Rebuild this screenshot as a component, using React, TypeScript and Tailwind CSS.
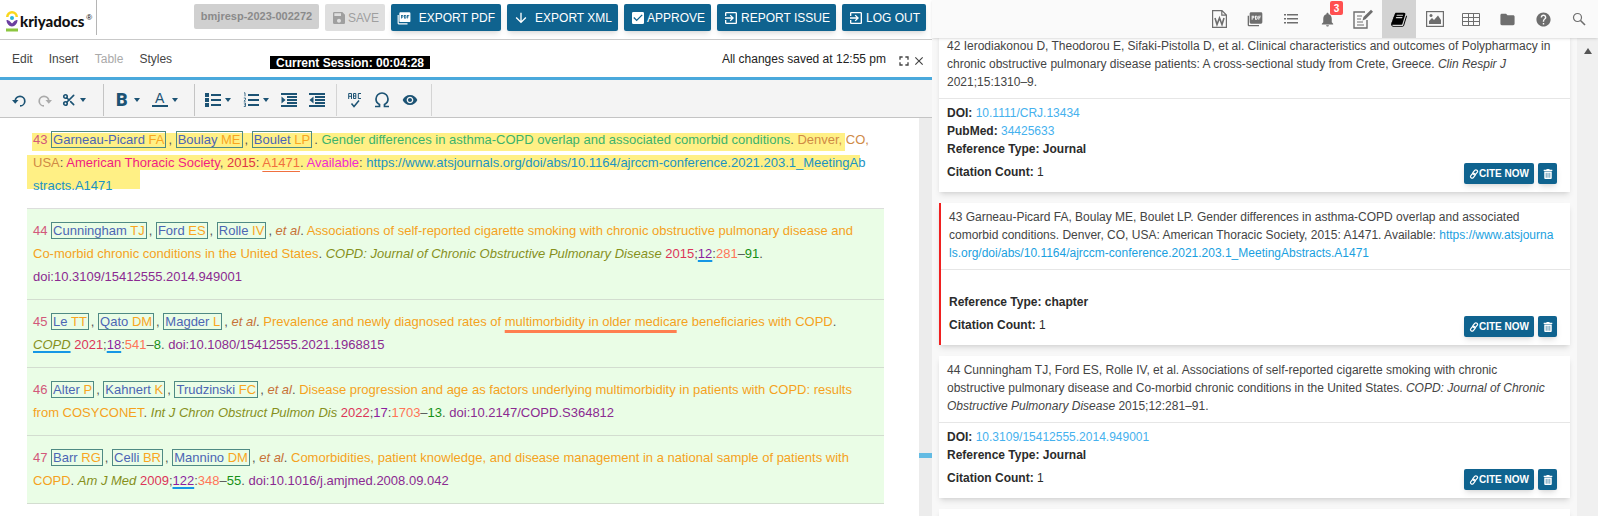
import type { ReactNode } from 'react';
import { Scissors } from 'lucide-react';
import {
  MdArrowDownward,
  MdCheckBox,
  MdClose,
  MdExitToApp,
  MdFolder,
  MdFullscreen,
  MdHelp,
  MdNotifications,
  MdRemoveRedEye,
  MdSave,
} from 'react-icons/md';
import { FaTrashAlt } from 'react-icons/fa';

/* ---------- icons ---------- */

function Logo() {
  return (
    <svg viewBox="0 0 24 44" className="w-3 h-[22px] shrink-0" aria-hidden="true">
      <path d="M2.500 14a9.500 9.500 0 0 1 19 0" fill="none" stroke="#f9d71c" strokeWidth="5" />
      <circle cx="12" cy="16" r="4" fill="#29b6d8" />
      <path d="M1 20c3 0 5 1 7 3l4 4 4-4c2-2 4-3 7-3 0 7-5 13-11 13S1 27 1 20z" fill="#6b3fa0" />
      <rect x="0" y="37" width="24" height="6" fill="#8cc63f" />
    </svg>
  );
}

function PdfIcon({ className }: { className: string }) {
  return (
    <svg viewBox="0 0 24 24" className={className} fill="currentColor" aria-hidden="true">
      <path d="M1 7h2v14h15v2H3a2 2 0 0 1-2-2z" />
      <path
        fillRule="evenodd"
        d="M6 2h15a2 2 0 0 1 2 2v13a2 2 0 0 1-2 2H6a2 2 0 0 1-2-2V4c0-1.1.9-2 2-2zm1 5v6h1.4v-2H10l1-1V8l-1-1zm1.4 1.2h1.2v1.6H8.4zM12 7v6h2.8l1.2-1.2V8.2L14.8 7zm1.4 1.3h1.2v3.4h-1.2zM17 7v6h1.4v-2.3H20V9.4h-1.6V8.3H21V7z"
      />
    </svg>
  );
}

function UndoIcon() {
  return (
    <svg viewBox="0 0 14 14" className="w-3.5 h-3.5" fill="none" stroke="currentColor" strokeWidth="1.7" aria-hidden="true">
      <path d="M3.200 8a4.800 4.800 0 1 1 4.800 4.900" />
      <path d="M0 7h6.500L3.200 10.800z" fill="currentColor" stroke="none" />
    </svg>
  );
}

function RedoIcon() {
  return (
    <svg viewBox="0 0 14 14" className="w-3.5 h-3.5" fill="none" stroke="currentColor" strokeWidth="1.7" aria-hidden="true">
      <path d="M10.800 8a4.800 4.800 0 1 0-4.800 4.900" />
      <path d="M7.500 7H14l-3.200 3.800z" fill="currentColor" stroke="none" />
    </svg>
  );
}

function BulletListIcon() {
  return (
    <svg viewBox="0 0 16 16" className="w-4 h-4" fill="currentColor" aria-hidden="true">
      <path d="M0 1h4v4H0zM6 2h10v2H6zM0 6h4v4H0zM6 7h10v2H6zM0 11h4v4H0zM6 12h10v2H6z" />
    </svg>
  );
}

function NumberedListIcon() {
  return (
    <svg viewBox="0 0 16 16" className="w-4 h-4" fill="none" stroke="currentColor" aria-hidden="true">
      <path d="M5 3h11M5 8h11M5 13h11" strokeWidth="2" />
      <path d="M1 .8h1v3.500M.8 6h1.700v1.400L1 9.200h1.700M.8 11h1.700v3.500H.8M1.200 12.800h1.300" strokeWidth=".8" />
    </svg>
  );
}

function IndentIcon({ outdent }: { outdent?: boolean }) {
  return (
    <svg viewBox="0 0 16 14" className="w-4 h-3.5" fill="currentColor" aria-hidden="true">
      <path d="M0 0h16v2H0zM6 3h10v2H6zM6 6h10v2H6zM6 9h10v2H6zM0 12h16v2H0z" />
      <path d={outdent ? 'M4.500 3.500v7L.5 7z' : 'M.5 3.500v7L4.500 7z'} />
    </svg>
  );
}

function SpellIcon() {
  return (
    <svg viewBox="0 0 14 16" className="w-3.5 h-4" fill="none" stroke="currentColor" aria-hidden="true">
      <path d="M.7 7V1.500h2.800V7M.7 4.300h2.800M5.500 6.500v-5h2.300v5zM5.500 4h2.300M13 1.500h-2.700v5H13" strokeWidth="1" />
      <path d="M3.500 11.500l2.500 3 5-6" strokeWidth="1.5" />
    </svg>
  );
}

function OmegaIcon() {
  return (
    <svg viewBox="0 0 16 16" className="w-4 h-4" fill="none" stroke="currentColor" strokeWidth="1.7" aria-hidden="true">
      <path d="M1 14.500h4.500v-2C3.500 11.500 2 9.500 2 7a6 6 0 0 1 12 0c0 2.500-1.500 4.500-3.500 5.500v2H15" />
    </svg>
  );
}

function WordIcon() {
  return (
    <svg viewBox="0 0 15 18" className="w-[15px] h-[18px]" fill="none" stroke="currentColor" aria-hidden="true">
      <path d="M.6.6h9.400l4.400 4.400v12.400H.6zM9.800.6v4.600h4.600" strokeWidth="1.2" />
      <path d="M3 8l2 6.500L7.500 8l2.500 6.500L12 8" strokeWidth="1.6" />
    </svg>
  );
}

function EditDocIcon() {
  return (
    <svg viewBox="0 0 20 20" className="w-5 h-5" fill="none" stroke="currentColor" aria-hidden="true">
      <path d="M12 3H1v16h13V11" strokeWidth="1.4" />
      <path d="M4 7h5M4 10h4M4 13h6M4 16h7" strokeWidth="1" />
      <path d="M9.500 11.500l1-3.500L18 .8l2 2-7.500 7.400z" fill="currentColor" stroke="none" />
    </svg>
  );
}

function BookIcon() {
  return (
    <svg viewBox="0 0 1664 1792" className="w-4 h-[17px]" fill="currentColor" aria-hidden="true">
      <path d="M1639 478q40 57 18 129l-275 906q-19 64-76.500 107.500T1183 1664H260q-77 0-148.500-53.500T12 1479q-24-67-2-127 0-4 3-27t4-37q1-8-3-21.500t-3-19.500q2-11 8-21t16.500-23.500T52 1200q23-38 45-91.500t30-91.500q3-10 .5-30t-.5-28q3-11 17-28t17-23q21-36 42-92t25-90q1-9-2.500-32t.5-28q4-13 22-30.500t22-22.500q19-26 42.500-84.500T340 461q1-8-3-25.500t-2-26.500q2-8 9-18t18-23 17-21q8-12 16.500-30.500t15-35 16-36 19.500-32T469.500 188t36-11.500T553 182l-1 3q38-9 51-9h761q74 0 114 56t18 130l-274 906q-36 119-71.500 153.500T1022 1456H153q-27 0-38 15-11 16-1 43 24 70 144 70h923q29 0 56-15.500t35-41.500l300-987q7-22 5-57 38 15 59 43zm-1064 2q-4 13 2 22.500t20 9.500h608q13 0 25.500-9.500T1247 480l21-64q4-13-2-22.500t-20-9.500H638q-13 0-25.500 9.500T596 416zm-83 256q-4 13 2 22.500t20 9.500h608q13 0 25.500-9.500T1164 736l21-64q4-13-2-22.500t-20-9.500H555q-13 0-25.500 9.500T513 672z" />
    </svg>
  );
}

function ListIcon() {
  return (
    <svg viewBox="0 0 14 10" className="w-3.5 h-2.5" fill="currentColor" aria-hidden="true">
      <path d="M0 0h2v1.500H0zM3 0h11v1.500H3zM0 4h2v1.500H0zM3 4h11v1.500H3zM0 8h2v1.500H0zM3 8h11v1.500H3z" />
    </svg>
  );
}

function ImageIcon() {
  return (
    <svg viewBox="0 0 18 16" className="w-[18px] h-4" fill="currentColor" aria-hidden="true">
      <rect x=".6" y=".6" width="16.800" height="14.800" fill="none" stroke="currentColor" strokeWidth="1.2" />
      <path d="M3 13v-3l3-3 2 2 4-4.500L15 9v4z" />
      <circle cx="5" cy="4.500" r="1.500" />
    </svg>
  );
}

function TableIcon() {
  return (
    <svg viewBox="0 0 18 13" className="w-[18px] h-[13px]" fill="none" stroke="currentColor" strokeWidth="1" aria-hidden="true">
      <path d="M.5.5h17v12H.5zM.5 4.500h17M.5 8.500h17M6.500.5v12M11.500.5v12" />
    </svg>
  );
}

function SearchIcon() {
  return (
    <svg viewBox="0 0 14 14" className="w-3.5 h-3.5" fill="none" stroke="currentColor" strokeWidth="1.2" aria-hidden="true">
      <circle cx="5.500" cy="5.500" r="4" />
      <path d="M8.500 8.500l4.500 4.500" strokeWidth="1.6" />
    </svg>
  );
}

function ChainIcon() {
  return (
    <svg viewBox="0 0 10 10" className="w-2.5 h-2.5" fill="none" stroke="currentColor" strokeWidth="1.2" aria-hidden="true">
      <rect x="4.600" y=".6" width="3.200" height="5.400" rx="1.600" transform="rotate(40 6.200 3.300)" />
      <rect x="2.200" y="4" width="3.200" height="5.400" rx="1.600" transform="rotate(40 3.800 6.700)" />
    </svg>
  );
}

function Caret() {
  return (
    <svg viewBox="0 0 6 4" className="w-1.5 h-1 shrink-0" fill="currentColor" aria-hidden="true">
      <path d="M0 0h6L3 4z" />
    </svg>
  );
}

/* ---------- header ---------- */

function ActionButton({ icon, label, width }: { icon: ReactNode; label: string; width: string }) {
  return (
    <button
      className={`${width} h-[27px] shrink-0 flex items-center justify-between px-1.5 rounded-xs bg-[#0f638f] text-white text-xs whitespace-nowrap shadow-md`}
    >
      {icon}
      {label}
    </button>
  );
}

function TopBar() {
  return (
    <header className="h-10 shrink-0 flex justify-between bg-white border-b border-[#c9c9c9]">
      <div className="h-[35px] w-[97px] pl-1.5 pt-1.5 flex items-center gap-0.5 border-r border-[#b5b5b5]">
        <Logo />
        <span className="font-[Lato] font-black text-[15px] leading-5 text-[#111]">kriyadocs</span>
        <span className="self-start pt-1 text-[8px] leading-4">®</span>
      </div>
      <div className="flex items-start gap-1.5 pt-1 pr-1.5">
        <span className="w-[125px] h-[25px] flex items-center justify-center rounded-xs bg-[#d0d0d0] text-[#8a8a8a] text-[11px] font-bold">
          bmjresp-2023-002272
        </span>
        <button
          disabled
          className="w-[60px] h-[27px] flex items-center justify-between px-1.5 rounded-xs bg-[#dfdfdf] text-[#9f9f9f] text-xs"
        >
          <MdSave className="w-4 h-4" />
          SAVE
        </button>
        <ActionButton width="w-[110px]" icon={<PdfIcon className="w-3.5 h-3.5" />} label="EXPORT PDF" />
        <ActionButton width="w-[111px]" icon={<MdArrowDownward className="w-4 h-4" />} label="EXPORT XML" />
        <ActionButton width="w-[87px]" icon={<MdCheckBox className="w-4 h-4" />} label="APPROVE" />
        <ActionButton width="w-[119px]" icon={<MdExitToApp className="w-4 h-4" />} label="REPORT ISSUE" />
        <ActionButton width="w-[84px]" icon={<MdExitToApp className="w-4 h-4" />} label="LOG OUT" />
      </div>
    </header>
  );
}

function MenuBar() {
  return (
    <div className="h-[37px] shrink-0 flex items-center pl-3 pr-1.5 text-xs text-[#444]">
      <nav className="flex gap-4 w-[258px]">
        <button>Edit</button>
        <button>Insert</button>
        <button disabled className="text-[#aaa]">Table</button>
        <button>Styles</button>
      </nav>
      <span className="mt-2 h-[13px] w-40 flex items-center justify-center bg-black text-white font-bold">
        Current Session: 00:04:28
      </span>
      <span className="ml-auto text-[#222]">All changes saved at 12:55 pm</span>
      <button aria-label="Full screen" className="ml-2.5 mt-1">
        <MdFullscreen className="w-4 h-4" />
      </button>
      <button aria-label="Close" className="mt-1">
        <MdClose className="w-3.5 h-3.5" />
      </button>
    </div>
  );
}

function Toolbar() {
  return (
    <div className="h-[41px] shrink-0 pt-0.5 flex items-center border-t-[3px] border-t-[#4aa9dc] border-b border-b-[#c4c4c4] bg-[#f4f4f4] text-[#1c5374]">
      <div className="h-8 w-[104px] pl-3 flex items-center border-r border-[#c4c4c4]">
        <button aria-label="Undo" className="mr-3"><UndoIcon /></button>
        <button aria-label="Redo" disabled className="mr-2.5 text-[#aaa]"><RedoIcon /></button>
        <button aria-label="Cut" className="flex items-center gap-1">
          <Scissors className="w-3.5 h-3.5" strokeWidth={2.8} />
          <Caret />
        </button>
      </div>
      <div className="h-8 w-[91px] pl-3 flex items-center gap-3 border-r border-[#c4c4c4]">
        <button aria-label="Bold" className="flex items-center gap-1.5">
          <span className="text-lg leading-5 font-black font-[Roboto]">B</span>
          <Caret />
        </button>
        <button aria-label="Text colour" className="flex items-center gap-1">
          <span className="w-4 text-sm leading-[13px] border-b-2 border-current">A</span>
          <Caret />
        </button>
      </div>
      <div className="h-8 w-[142px] pl-2.5 flex items-center gap-3 border-r border-[#d4d4d4]">
        <button aria-label="Bulleted list" className="flex items-center gap-1">
          <BulletListIcon />
          <Caret />
        </button>
        <button aria-label="Numbered list" className="flex items-center gap-1">
          <NumberedListIcon />
          <Caret />
        </button>
        <button aria-label="Increase indent"><IndentIcon /></button>
        <button aria-label="Decrease indent"><IndentIcon outdent /></button>
      </div>
      <div className="h-8 w-[95px] pl-[11px] flex items-center gap-3 border-r border-[#d4d4d4]">
        <button aria-label="Spell check"><SpellIcon /></button>
        <button aria-label="Special character"><OmegaIcon /></button>
        <button aria-label="Preview"><MdRemoveRedEye className="w-4 h-4" /></button>
      </div>
    </div>
  );
}

/* ---------- editor ---------- */

type Ref = {
  no: string;
  authors: [string, string][];
  body: ReactNode;
};

const T = ({ c, children }: { c: string; children: ReactNode }) => <span className={c}>{children}</span>;

const TITLE = 'text-[#f5a21d]';
const JOURNAL = 'italic text-[#86901c]';
const YEAR = 'text-[#dc3558]';
const VOL = 'text-[#8b1fa0]';
const FPAGE = 'text-[#ff7558]';
const LPAGE = 'text-[#169016]';
const DOI = 'text-[#8b2a91]';
const UNDER = 'underline decoration-2 decoration-[#1597e5] underline-offset-2';

const etAl = <>, <i className="text-[#c77238]">et al</i>. </>;

const editorRefs: Ref[] = [
  {
    no: '44',
    authors: [['Cunningham', 'TJ'], ['Ford', 'ES'], ['Rolle', 'IV']],
    body: (
      <>
        {etAl}
        <T c={TITLE}>Associations of self-reported cigarette smoking with chronic obstructive pulmonary disease and<br />Co-morbid chronic conditions in the United States</T>.{' '}
        <T c={JOURNAL}>COPD: Journal of Chronic Obstructive Pulmonary Disease</T> <T c={YEAR}>2015</T>;
        <T c={`${VOL} ${UNDER}`}>12</T>:<T c={FPAGE}>281</T>–<T c={LPAGE}>91</T>.<br />
        <T c={DOI}>doi:10.3109/15412555.2014.949001</T>
      </>
    ),
  },
  {
    no: '45',
    authors: [['Le', 'TT'], ['Qato', 'DM'], ['Magder', 'L']],
    body: (
      <>
        {etAl}
        <T c={TITLE}>
          Prevalence and newly diagnosed rates of{' '}
          <span className="underline decoration-[3px] decoration-[#ff7f50] underline-offset-4 [text-decoration-skip-ink:none]">
            multimorbidity in older medica
          </span>
          re beneficiaries with COPD
        </T>.<br />
        <T c={`${JOURNAL} ${UNDER}`}>COPD</T> <T c={YEAR}>2021</T>;<T c={`${VOL} ${UNDER}`}>18</T>:
        <T c={FPAGE}>541</T>–<T c={LPAGE}>8</T>. <T c={DOI}>doi:10.1080/15412555.2021.1968815</T>
      </>
    ),
  },
  {
    no: '46',
    authors: [['Alter', 'P'], ['Kahnert', 'K'], ['Trudzinski', 'FC']],
    body: (
      <>
        {etAl}
        <T c={TITLE}>Disease progression and age as factors underlying multimorbidity in patients with COPD: results<br />from COSYCONET</T>.{' '}
        <T c={JOURNAL}>Int J Chron Obstruct Pulmon Dis</T> <T c={YEAR}>2022</T>;<T c={VOL}>17</T>:
        <T c={FPAGE}>1703</T>–<T c={LPAGE}>13</T>. <T c={DOI}>doi:10.2147/COPD.S364812</T>
      </>
    ),
  },
  {
    no: '47',
    authors: [['Barr', 'RG'], ['Celli', 'BR'], ['Mannino', 'DM']],
    body: (
      <>
        {etAl}
        <T c={TITLE}>Comorbidities, patient knowledge, and disease management in a national sample of patients with<br />COPD</T>.{' '}
        <T c={JOURNAL}>Am J Med</T> <T c={YEAR}>2009</T>;<T c={`${VOL} ${UNDER}`}>122</T>:
        <T c={FPAGE}>348</T>–<T c={LPAGE}>55</T>. <T c={DOI}>doi:10.1016/j.amjmed.2008.09.042</T>
      </>
    ),
  },
];

function Authors({ no, authors }: { no: string; authors: [string, string][] }) {
  return (
    <>
      <span className="text-[#d2587a]">{no}</span>{' '}
      {authors.map(([name, initials], i) => (
        <span key={name}>
          {i > 0 && ', '}
          <span className="border border-[#4f8a84] px-px mr-0.5 text-[#4c66b4]">
            {name} <span className="text-[#f9a51f]">{initials}</span>
          </span>
        </span>
      ))}
    </>
  );
}

function Editor() {
  return (
    <div className="flex-1 min-h-0 flex">
      <div className="flex-1 pl-[27px] pr-[35px] text-[13px] leading-[23px] text-[#555]">
        <div className="relative isolate pl-1.5 pt-2.5 pb-[11px] border-b border-[#dcdedc]">
          {/* selection highlight */}
          <div className="absolute -z-10 left-[5px] right-[39px] top-[15px] h-[18px] bg-[#fff085]" />
          <div className="absolute -z-10 left-0 right-6 top-[37px] h-[15px] bg-[#fff085]" />
          <div className="absolute -z-10 left-0 w-[113px] top-[52px] h-[19px] bg-[#fff085]" />
          <p>
            <Authors no="43" authors={[['Garneau-Picard', 'FA'], ['Boulay', 'ME'], ['Boulet', 'LP']]} />.{' '}
            <T c="text-[#3db36c]">Gender differences in asthma-COPD overlap and associated comorbid conditions</T>.{' '}
            <T c="text-[#cf8a45]">Denver, CO,<br />USA</T>: <T c="text-[#f01c82]">American Thoracic Society</T>,{' '}
            <T c="text-[#dc3545]">2015</T>: <T c="text-[#f0703f] underline underline-offset-4">A1471</T>.{' '}
            <T c="text-[#ee2bd0]">Available</T>:{' '}
            <T c="text-[#1b93c4]">https://www.atsjournals.org/doi/abs/10.1164/ajrccm-conference.2021.203.1_MeetingAb<br />stracts.A1471</T>
          </p>
        </div>
        {editorRefs.map((r) => (
          <div key={r.no} className="pl-1.5 pt-2.5 pb-[11px] border-b border-[#d3ddd0] bg-[#eafde6]">
            <p>
              <Authors no={r.no} authors={r.authors} />
              {r.body}
            </p>
          </div>
        ))}
      </div>
      <div className="relative w-[13px] bg-[#ececec]">
        <div className="absolute left-0 right-0 top-[335px] h-[5px] bg-[#63bbe3]" />
      </div>
    </div>
  );
}

/* ---------- reference panel ---------- */

const tabs = [
  { label: 'Word', icon: <WordIcon /> },
  { label: 'PDF', icon: <PdfIcon className="w-4 h-4" /> },
  { label: 'Index', icon: <ListIcon /> },
  { label: 'Notifications', icon: <MdNotifications className="w-[17px] h-[17px]" />, badge: 3 },
  { label: 'Notes', icon: <EditDocIcon /> },
  { label: 'References', icon: <BookIcon />, active: true },
  { label: 'Figures', icon: <ImageIcon /> },
  { label: 'Tables', icon: <TableIcon /> },
  { label: 'Files', icon: <MdFolder className="w-[17px] h-[17px]" /> },
  { label: 'Help', icon: <MdHelp className="w-[17px] h-[17px]" /> },
  { label: 'Search', icon: <SearchIcon /> },
];

function RefCard({
  active,
  text,
  doi,
  pubmed,
  type,
}: {
  active?: boolean;
  text: ReactNode;
  doi?: string;
  pubmed?: string;
  type: string;
}) {
  return (
    <article
      className={`bg-white shadow-md text-xs leading-[18px] text-[#444] ${active ? 'border-l-2 border-[#f02020]' : ''}`}
    >
      <p className="px-2 pt-[5px] pb-[7px] border-b border-[#e6e6e6]">{text}</p>
      <div className="px-2 pt-[5px] pb-2 font-bold text-[#2b2b2b]">
        {doi ? (
          <p>DOI: <a href="#doi" className="font-normal text-[#45b1ee]">{doi}</a></p>
        ) : (
          <p className="h-[18px]" />
        )}
        {pubmed && (
          <p>PubMed: <a href="#pubmed" className="font-normal text-[#45b1ee]">{pubmed}</a></p>
        )}
        <p>Reference Type: {type}</p>
        <div className="mt-[5px] pr-[5px] flex items-start gap-1">
          <span className="mr-auto">Citation Count: <span className="font-normal">1</span></span>
          <button className="w-[70px] h-[21px] flex items-center justify-center rounded-xs bg-[#0f638f] text-white text-[10px] font-bold shadow-md">
            <ChainIcon />
            CITE NOW
          </button>
          <button aria-label="Delete" className="w-[19px] h-[21px] flex items-center justify-center rounded-xs bg-[#0f638f] text-white shadow-md">
            <FaTrashAlt className="w-2.5 h-2.5" />
          </button>
        </div>
      </div>
    </article>
  );
}

function ReferencePanel() {
  return (
    <aside className="w-[666px] shrink-0 flex flex-col bg-[#f8f8f8]">
      <div className="relative z-10 h-[38px] shrink-0 flex justify-end gap-0.5 pr-0.5 bg-[#fafafa] text-[#6e6e6e] shadow-sm">
        {tabs.map((t) => (
          <button
            key={t.label}
            aria-label={t.label}
            className={`relative w-[34px] flex items-center justify-center ${t.active ? 'bg-[#d3d3d3] text-black' : ''}`}
          >
            {t.icon}
            {t.badge && (
              <span className="absolute left-5 top-px w-[13px] h-3.5 flex items-center justify-center rounded-xs bg-[#ff5050] text-white text-[10px] font-bold">
                {t.badge}
              </span>
            )}
          </button>
        ))}
      </div>
      <div className="flex-1 min-h-0 flex overflow-hidden">
        <div className="flex-1 -mt-1.5 px-[7px] flex flex-col gap-[11px]">
          <RefCard
            text={
              <>
                42 Ierodiakonou D, Theodorou E, Sifaki-Pistolla D, et al. Clinical characteristics and outcomes of Polypharmacy in
                chronic obstructive pulmonary disease patients: A cross-sectional study from Crete, Greece. <i>Clin Respir J</i>
                <br />
                2021;15:1310–9.
              </>
            }
            doi="10.1111/CRJ.13434"
            pubmed="34425633"
            type="Journal"
          />
          <RefCard
            active
            text={
              <>
                43 Garneau-Picard FA, Boulay ME, Boulet LP. Gender differences in asthma-COPD overlap and associated
                <br />
                comorbid conditions. Denver, CO, USA: American Thoracic Society, 2015: A1471. Available:{' '}
                <a href="#a1471" className="text-[#1a9fe0]">
                  https://www.atsjourna
                  <br />
                  ls.org/doi/abs/10.1164/ajrccm-conference.2021.203.1_MeetingAbstracts.A1471
                </a>
              </>
            }
            type="chapter"
          />
          <RefCard
            text={
              <>
                44 Cunningham TJ, Ford ES, Rolle IV, et al. Associations of self-reported cigarette smoking with chronic
                <br />
                obstructive pulmonary disease and Co-morbid chronic conditions in the United States. <i>COPD: Journal of Chronic
                Obstructive Pulmonary Disease</i> 2015;12:281–91.
              </>
            }
            doi="10.3109/15412555.2014.949001"
            type="Journal"
          />
          <div className="h-20 shrink-0 bg-white shadow-md" />
        </div>
        <div className="w-[21px] flex justify-center pt-2.5 bg-[#f0f0f0]">
          <svg viewBox="0 0 8 6" className="w-2 h-1.5" fill="#555" aria-hidden="true">
            <path d="M4 0l4 6H0z" />
          </svg>
        </div>
      </div>
    </aside>
  );
}

export default function App() {
  return (
    <div className="h-screen flex overflow-hidden bg-white font-['Liberation_Sans',Arial,sans-serif]">
      <main className="flex-1 min-w-0 flex flex-col">
        <TopBar />
        <MenuBar />
        <Toolbar />
        <Editor />
      </main>
      <ReferencePanel />
    </div>
  );
}
